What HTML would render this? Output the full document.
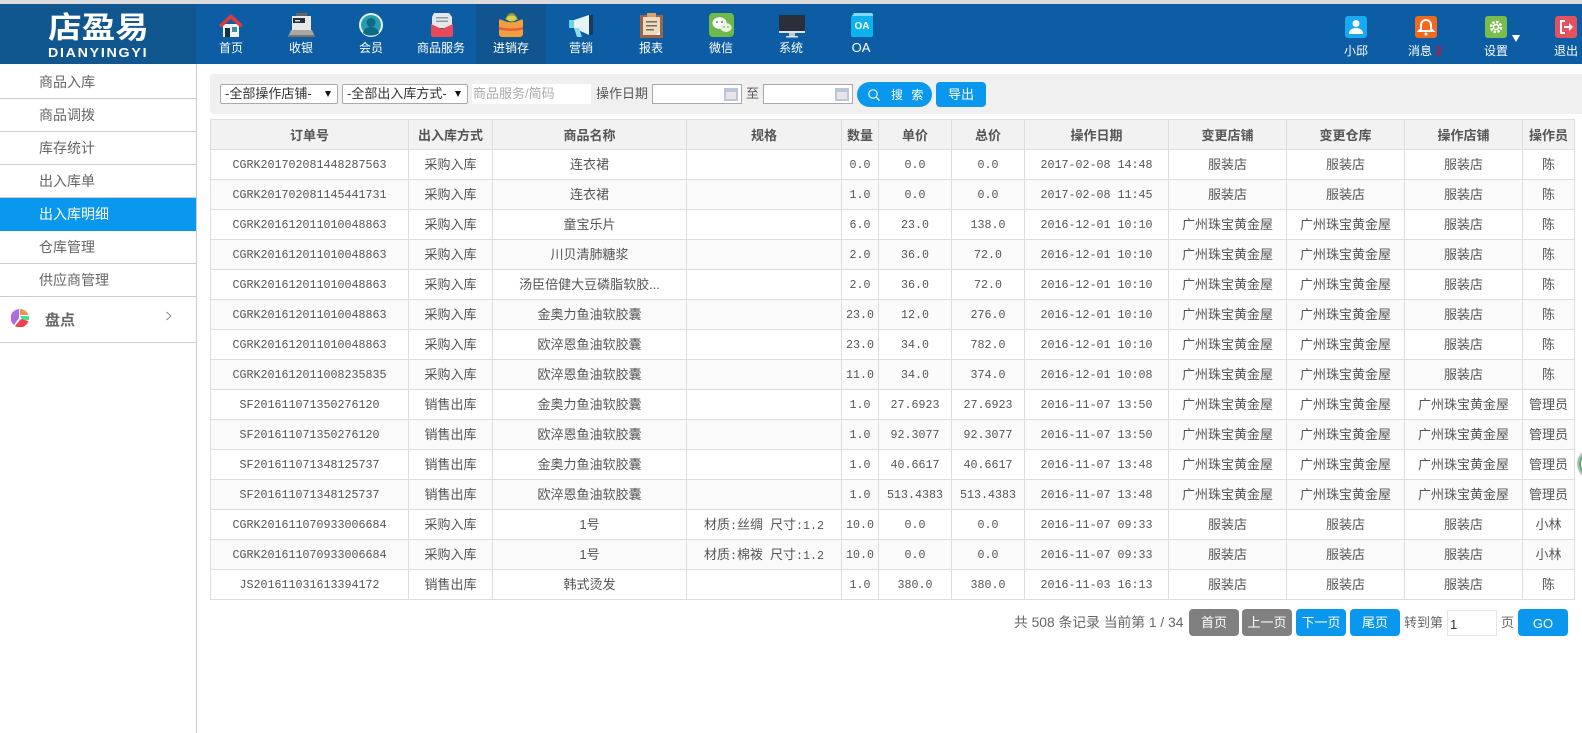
<!DOCTYPE html>
<html lang="zh-CN">
<head>
<meta charset="utf-8">
<title>店盈易</title>
<style>
*{box-sizing:border-box}
html,body{margin:0;padding:0;width:1582px;height:733px;overflow:hidden;background:#fff}
body{font-family:"Liberation Sans","Noto Sans CJK SC",sans-serif;font-size:13px;color:#555;position:relative}
.a{position:absolute}
#top{left:0;top:0;width:1582px;height:4px;background:#dcdcdc}
#hd{left:0;top:4px;width:1582px;height:60px;background:#0d5da5}
#logo{left:0;top:4px;width:196px;height:60px;background:#10568f}
#logo .t{position:absolute;left:48px;top:4px;font-size:30px;line-height:42px;font-weight:700;color:#fff;white-space:nowrap;transform:scaleX(1.12);transform-origin:0 50%}
#logo .e{position:absolute;left:48px;top:42px;font-size:12.5px;line-height:14px;font-weight:700;color:#fff;letter-spacing:1.5px;white-space:nowrap;transform:scaleX(1.14);transform-origin:0 50%}
.nav{position:absolute;top:4px;width:70px;height:60px;color:#fff;text-align:center}
.nav svg{position:absolute;left:22px;top:9px}
.nav span{position:absolute;left:-5px;right:-5px;top:35px;font-size:12px;line-height:18px}
.nav.on{background:#10558f}
.r{position:absolute;top:0;width:60px;height:64px;color:#fff;text-align:center}
.r svg{position:absolute;left:19px;top:16px}
.r span{position:absolute;left:0;right:0;top:42px;font-size:12px;line-height:18px}
#side{left:0;top:64px;width:197px;height:669px;border-right:1px solid #ccc;background:#fff}
.si{position:absolute;left:0;width:196px;height:33px;border-bottom:1px solid #ccc;padding-left:39px;font-size:14px;line-height:32px;color:#666}
.si.on{background:#0a98ee;color:#fff;border-bottom:0}
#bar{left:210px;top:74px;width:1372px;height:40px;background:#f0f0f0;border-radius:4px 0 0 4px}
.sel{position:absolute;top:84px;height:20px;background:#fff;border:1px solid #a9a9a9;border-radius:2px;font-size:13px;line-height:18px;color:#333;padding-left:4px;white-space:nowrap}
.sel i{position:absolute;top:6px;width:0;height:0;border-left:3.500px solid transparent;border-right:3.500px solid transparent;border-top:6px solid #111}
.date{position:absolute;top:84px;height:20px;background:#fff;border:1px solid #a9a9a9}
.date svg{position:absolute;right:2px;top:3px}
.lbl{position:absolute;font-size:14px;line-height:20px;color:#555;white-space:nowrap}
.btn{position:absolute;background:#0a98ee;color:#fff;text-align:center;border-radius:4px;white-space:nowrap}
.gray{background:#808080}
table{position:absolute;left:210px;top:119px;width:1364px;border-collapse:collapse;table-layout:fixed}
th,td{border:1px solid #ddd;height:30px;padding:0 0 2px;text-align:center;font-size:13px;color:#555;white-space:nowrap;overflow:hidden;font-weight:400}
th{background:#f2f2f2;font-weight:700;color:#555;padding:0}
tbody tr:nth-child(even) td{background:#fafafa}
.m{font-family:"Liberation Mono",monospace;font-size:11.67px}
td.m{padding:0}
</style>
</head>
<body>
<div id="top" class="a"></div>
<div id="hd" class="a"></div>
<div id="logo" class="a"><div class="t">店盈易</div><div class="e">DIANYINGYI</div></div>

<div class="nav" style="left:196px"><svg width="26" height="26" viewBox="0 0 26 26"><path d="M5 11h16v13H5z" fill="#eef3f3"/><path d="M7 15h5v9H7z" fill="#16303f"/><path d="M14 14h5v5h-5z" fill="#3f8f9d"/><path d="M1 12 13 1l12 11-2.500 2.500L13 6 3.500 14.500z" fill="#dd3b3b"/></svg><span>首页</span></div>
<div class="nav" style="left:266px"><svg width="27" height="26" viewBox="0 0 27 26"><path d="M8 0h11v4H8z" fill="#666"/><path d="M4 3h19v14H4z" fill="#e8e8e8"/><path d="M5 5h12v5H5z" fill="#25313a"/><path d="M7 7h5v1.500H7z" fill="#dcdcdc"/><path d="M3 17h21l3 7H0z" fill="#aaa6a2"/><path d="M0 22h27v2H0z" fill="#77736f"/></svg><span>收银</span></div>
<div class="nav" style="left:337px"><svg width="26" height="26" viewBox="0 0 26 26"><circle cx="12" cy="12" r="12" fill="#dff3f2"/><circle cx="12" cy="12" r="10" fill="#2b9db0"/><circle cx="12" cy="9.500" r="4.500" fill="#0e6a86"/><path d="M4 20c1-5 5-6 8-6s7 1 8 6c-4 3.500-12 3.500-16 0z" fill="#0e6a86"/></svg><span style="left:-6px;right:-4px">会员</span></div>
<div class="nav" style="left:406px"><svg width="26" height="26" viewBox="0 0 26 26"><path d="M6 0h15l3 4v11H4V4z" fill="#e4e8ea"/><path d="M8 4h12v1.500H8zM8 7.500h12V9H8z" fill="#8f9ba3"/><path d="M3 11 14 16l11-5v11a2 2 0 0 1-2 2H5a2 2 0 0 1-2-2z" fill="#e8495a"/></svg><span>商品服务</span></div>
<div class="nav on" style="left:476px"><svg width="26" height="26" viewBox="0 0 26 26"><path d="M7 7C9 2 11 0 13.500 0c3 0 5 3 6.500 7z" fill="#8d9b3a"/><ellipse cx="13.500" cy="5.500" rx="5" ry="3" fill="#d6d24a"/><path d="M1 8c0-2 1-2 3-1 6 3 12 3 18 0 2-1 3-1 3 1v13a3 3 0 0 1-3 3H4a3 3 0 0 1-3-3z" fill="#ef9f3f"/><path d="M1 14c8 2 16 2 24 0v2.500c-8 2-16 2-24 0z" fill="#e2613a"/></svg><span>进销存</span></div>
<div class="nav" style="left:546px"><svg width="26" height="26" viewBox="0 0 26 26"><path d="M1 7h5v8H1z" fill="#6fd0e6"/><path d="M6 7 21 2v20L6 15z" fill="#e4f4f9"/><path d="M21 2h4v20h-4z" fill="#173c5c"/><path d="M6 15h5l3 9H9z" fill="#8adcee"/></svg><span>营销</span></div>
<div class="nav" style="left:616px"><svg width="26" height="26" viewBox="0 0 26 26"><path d="M2 2h23v23H2z" fill="#a0634a"/><path d="M5 4h17v18H5z" fill="#e9dcc0"/><path d="M8 8h11v1.500H8zM8 12h11v1.500H8zM8 16h8v1.500H8z" fill="#7d6a58"/><path d="M9 0h9v4H9z" fill="#d9a36a"/><path d="M22 18v4h-4z" fill="#fff"/></svg><span>报表</span></div>
<div class="nav" style="left:687px"><svg width="26" height="26" viewBox="0 0 26 26"><rect width="25" height="24" y="0" rx="4" fill="#6fb84a"/><ellipse cx="10.500" cy="10" rx="7" ry="5.800" fill="#fff"/><ellipse cx="17" cy="14.500" rx="5.500" ry="4.500" fill="#e8f3e0"/><circle cx="8" cy="9" r="1" fill="#5a9a3a"/><circle cx="13" cy="9" r="1" fill="#5a9a3a"/><circle cx="15" cy="14" r=".8" fill="#5a9a3a"/><circle cx="19" cy="14" r=".8" fill="#5a9a3a"/></svg><span style="left:-6px;right:-4px">微信</span></div>
<div class="nav" style="left:757px"><svg width="26" height="26" viewBox="0 0 26 26"><rect y="2" width="26" height="18" rx="1" fill="#2a2f3a"/><path d="M0 18h26v2H0z" fill="#dfe4e8"/><path d="M10 20h6v3h-6z" fill="#c4cad0"/><path d="M7 23h12v1.500H7z" fill="#dfe4e8"/></svg><span style="left:-6px;right:-4px">系统</span></div>
<div class="nav" style="left:828px"><svg width="24" height="26" viewBox="0 0 24 26"><path d="M4 0h17a2 2 0 0 1 2 2v20a2 2 0 0 1-2 2H3a2 2 0 0 1-2-2V4z" fill="#0bb2ec"/><path d="M4 0h17a2 2 0 0 1 2 2v1H2z" fill="#7fdaf5"/><text x="12" y="16" font-family="Liberation Sans" font-size="10" font-weight="700" fill="#fff" text-anchor="middle">OA</text></svg><span style="font-size:13px;left:-7px;right:-3px">OA</span></div>

<div class="r" style="left:1326px"><svg width="22" height="22" viewBox="0 0 22 22"><rect width="22" height="22" rx="3" fill="#19a9f0"/><circle cx="11" cy="7.500" r="3.500" fill="#fff"/><path d="M4 18c0-4 3-6 7-6s7 2 7 6z" fill="#fff"/></svg><span>小邱</span></div>
<div class="r" style="left:1396px"><svg width="22" height="22" viewBox="0 0 22 22"><rect width="22" height="22" rx="3" fill="#f2691e"/><path d="M11 4a5 5 0 0 0-5 5v4l-2 2h14l-2-2V9a5 5 0 0 0-5-5z" fill="none" stroke="#fff" stroke-width="2"/><circle cx="11" cy="18" r="1.500" fill="#fff"/></svg><span style="left:-2px">消息 <b style="color:#d3102c;font-size:12px">2</b></span></div>
<div class="r" style="left:1466px"><svg width="22" height="22" viewBox="0 0 22 22"><rect width="22" height="22" rx="3" fill="#79bd4a"/><circle cx="11" cy="11" r="5" fill="none" stroke="#fff" stroke-width="2.500" stroke-dasharray="2.600 1.300"/><circle cx="11" cy="11" r="2.500" fill="none" stroke="#fff" stroke-width="1.500"/></svg><span>设置</span></div>
<div class="a" style="left:1512px;top:35px;width:0;height:0;border-left:4px solid transparent;border-right:4px solid transparent;border-top:7px solid #fff"></div>
<div class="r" style="left:1536px"><svg width="22" height="22" viewBox="0 0 22 22"><rect width="22" height="22" rx="3" fill="#e4515f"/><path d="M10 5H6v12h4" fill="none" stroke="#fff" stroke-width="2"/><path d="M9 10h5V7l4 4-4 4v-3H9z" fill="#fff"/></svg><span>退出</span></div>

<div id="side" class="a">
<div class="si" style="top:2px">商品入库</div>
<div class="si" style="top:35px">商品调拨</div>
<div class="si" style="top:68px">库存统计</div>
<div class="si" style="top:101px">出入库单</div>
<div class="si on" style="top:134px">出入库明细</div>
<div class="si" style="top:167px">仓库管理</div>
<div class="si" style="top:200px">供应商管理</div>
<div class="si" style="top:233px;height:46px;padding-left:45px;font-size:15px;font-weight:700;line-height:47px">盘点</div>
<svg class="a" style="left:11px;top:245px" width="18" height="18" viewBox="0 0 18 18"><path d="M8 0v9l-5 7A9 9 0 0 1 8 0z" fill="#b06be0"/><path d="M9 0a9 9 0 0 1 8.500 6H9z" fill="#ee9350"/><path d="M9 7h9v4H11z" fill="#45e0a0"/><path d="M10 10l7.500 2A9 9 0 0 1 4 17z" fill="#ef4050"/></svg>
<svg class="a" style="left:165px;top:246px" width="8" height="12" viewBox="0 0 8 12"><path d="M1.500 2 6 6l-4.500 4" fill="none" stroke="#888" stroke-width="1"/></svg>
</div>

<div id="bar" class="a"></div>
<div class="sel" style="left:220px;width:118px">-全部操作店铺-<i style="left:104px"></i></div>
<div class="sel" style="left:342px;width:126px">-全部出入库方式-<i style="left:112px"></i></div>
<div class="a" style="left:472px;top:84px;width:119px;height:20px;background:#fff;font-size:13px;line-height:20px;color:#aaa;padding-left:1px">商品服务/简码</div>
<div class="lbl" style="left:596px;top:84px;font-size:13px">操作日期</div>
<div class="date" style="left:652px;width:90px"><svg width="15" height="13" viewBox="0 0 15 13"><rect width="14" height="13" fill="#bcc6d8"/><rect x="2" y="4" width="10" height="7" fill="#e8e4ea"/></svg></div>
<div class="lbl" style="left:746px;top:84px;font-size:13px">至</div>
<div class="date" style="left:763px;width:90px"><svg width="15" height="13" viewBox="0 0 15 13"><rect width="14" height="13" fill="#bcc6d8"/><rect x="2" y="4" width="10" height="7" fill="#e8e4ea"/></svg></div>
<div class="btn" style="left:857px;top:82px;width:75px;height:25px;border-radius:13px;font-size:12px;line-height:26px;padding-left:34px;letter-spacing:2.500px;text-align:left">搜 索<svg class="a" style="left:10px;top:6px" width="14" height="14" viewBox="0 0 14 14"><circle cx="6" cy="6" r="4.200" fill="none" stroke="#fff" stroke-width="1.100"/><path d="M9 9l3.500 3.500" stroke="#fff" stroke-width="1.300"/></svg></div>
<div class="btn" style="left:936px;top:82px;width:50px;height:25px;font-size:13px;line-height:26px">导出</div>

<table>
<colgroup><col style="width:198px"><col style="width:84px"><col style="width:194px"><col style="width:155px"><col style="width:37px"><col style="width:73px"><col style="width:73px"><col style="width:144px"><col style="width:118px"><col style="width:118px"><col style="width:118px"><col style="width:52px"></colgroup>
<thead><tr><th>订单号</th><th>出入库方式</th><th>商品名称</th><th>规格</th><th>数量</th><th>单价</th><th>总价</th><th>操作日期</th><th>变更店铺</th><th>变更仓库</th><th>操作店铺</th><th>操作员</th></tr></thead>
<tbody>
<tr><td class="m">CGRK201702081448287563</td><td>采购入库</td><td>连衣裙</td><td></td><td class="m">0.0</td><td class="m">0.0</td><td class="m">0.0</td><td class="m">2017-02-08 14:48</td><td>服装店</td><td>服装店</td><td>服装店</td><td>陈</td></tr>
<tr><td class="m">CGRK201702081145441731</td><td>采购入库</td><td>连衣裙</td><td></td><td class="m">1.0</td><td class="m">0.0</td><td class="m">0.0</td><td class="m">2017-02-08 11:45</td><td>服装店</td><td>服装店</td><td>服装店</td><td>陈</td></tr>
<tr><td class="m">CGRK201612011010048863</td><td>采购入库</td><td>童宝乐片</td><td></td><td class="m">6.0</td><td class="m">23.0</td><td class="m">138.0</td><td class="m">2016-12-01 10:10</td><td>广州珠宝黄金屋</td><td>广州珠宝黄金屋</td><td>服装店</td><td>陈</td></tr>
<tr><td class="m">CGRK201612011010048863</td><td>采购入库</td><td>川贝清肺糖浆</td><td></td><td class="m">2.0</td><td class="m">36.0</td><td class="m">72.0</td><td class="m">2016-12-01 10:10</td><td>广州珠宝黄金屋</td><td>广州珠宝黄金屋</td><td>服装店</td><td>陈</td></tr>
<tr><td class="m">CGRK201612011010048863</td><td>采购入库</td><td>汤臣倍健大豆磷脂软胶...</td><td></td><td class="m">2.0</td><td class="m">36.0</td><td class="m">72.0</td><td class="m">2016-12-01 10:10</td><td>广州珠宝黄金屋</td><td>广州珠宝黄金屋</td><td>服装店</td><td>陈</td></tr>
<tr><td class="m">CGRK201612011010048863</td><td>采购入库</td><td>金奥力鱼油软胶囊</td><td></td><td class="m">23.0</td><td class="m">12.0</td><td class="m">276.0</td><td class="m">2016-12-01 10:10</td><td>广州珠宝黄金屋</td><td>广州珠宝黄金屋</td><td>服装店</td><td>陈</td></tr>
<tr><td class="m">CGRK201612011010048863</td><td>采购入库</td><td>欧淬恩鱼油软胶囊</td><td></td><td class="m">23.0</td><td class="m">34.0</td><td class="m">782.0</td><td class="m">2016-12-01 10:10</td><td>广州珠宝黄金屋</td><td>广州珠宝黄金屋</td><td>服装店</td><td>陈</td></tr>
<tr><td class="m">CGRK201612011008235835</td><td>采购入库</td><td>欧淬恩鱼油软胶囊</td><td></td><td class="m">11.0</td><td class="m">34.0</td><td class="m">374.0</td><td class="m">2016-12-01 10:08</td><td>广州珠宝黄金屋</td><td>广州珠宝黄金屋</td><td>服装店</td><td>陈</td></tr>
<tr><td class="m">SF201611071350276120</td><td>销售出库</td><td>金奥力鱼油软胶囊</td><td></td><td class="m">1.0</td><td class="m">27.6923</td><td class="m">27.6923</td><td class="m">2016-11-07 13:50</td><td>广州珠宝黄金屋</td><td>广州珠宝黄金屋</td><td>广州珠宝黄金屋</td><td>管理员</td></tr>
<tr><td class="m">SF201611071350276120</td><td>销售出库</td><td>欧淬恩鱼油软胶囊</td><td></td><td class="m">1.0</td><td class="m">92.3077</td><td class="m">92.3077</td><td class="m">2016-11-07 13:50</td><td>广州珠宝黄金屋</td><td>广州珠宝黄金屋</td><td>广州珠宝黄金屋</td><td>管理员</td></tr>
<tr><td class="m">SF201611071348125737</td><td>销售出库</td><td>金奥力鱼油软胶囊</td><td></td><td class="m">1.0</td><td class="m">40.6617</td><td class="m">40.6617</td><td class="m">2016-11-07 13:48</td><td>广州珠宝黄金屋</td><td>广州珠宝黄金屋</td><td>广州珠宝黄金屋</td><td>管理员</td></tr>
<tr><td class="m">SF201611071348125737</td><td>销售出库</td><td>欧淬恩鱼油软胶囊</td><td></td><td class="m">1.0</td><td class="m">513.4383</td><td class="m">513.4383</td><td class="m">2016-11-07 13:48</td><td>广州珠宝黄金屋</td><td>广州珠宝黄金屋</td><td>广州珠宝黄金屋</td><td>管理员</td></tr>
<tr><td class="m">CGRK201611070933006684</td><td>采购入库</td><td>1号</td><td>材质<span class="m">:</span>丝绸<span class="m"> </span>尺寸<span class="m">:1.2</span></td><td class="m">10.0</td><td class="m">0.0</td><td class="m">0.0</td><td class="m">2016-11-07 09:33</td><td>服装店</td><td>服装店</td><td>服装店</td><td>小林</td></tr>
<tr><td class="m">CGRK201611070933006684</td><td>采购入库</td><td>1号</td><td>材质<span class="m">:</span>棉袯<span class="m"> </span>尺寸<span class="m">:1.2</span></td><td class="m">10.0</td><td class="m">0.0</td><td class="m">0.0</td><td class="m">2016-11-07 09:33</td><td>服装店</td><td>服装店</td><td>服装店</td><td>小林</td></tr>
<tr><td class="m">JS201611031613394172</td><td>销售出库</td><td>韩式烫发</td><td></td><td class="m">1.0</td><td class="m">380.0</td><td class="m">380.0</td><td class="m">2016-11-03 16:13</td><td>服装店</td><td>服装店</td><td>服装店</td><td>陈</td></tr>
</tbody>
</table>

<div class="lbl" style="left:1014px;top:613px;font-size:13.800px;color:#666">共 508 条记录 当前第 1 / 34</div>
<div class="btn gray" style="left:1189px;top:609px;width:50px;height:27px;font-size:13px;line-height:28px">首页</div>
<div class="btn gray" style="left:1242px;top:609px;width:50px;height:27px;font-size:13px;line-height:28px">上一页</div>
<div class="btn" style="left:1296px;top:609px;width:50px;height:27px;font-size:13px;line-height:28px">下一页</div>
<div class="btn" style="left:1350px;top:609px;width:50px;height:27px;font-size:13px;line-height:28px">尾页</div>
<div class="lbl" style="left:1404px;top:613px;font-size:13px;color:#666">转到第</div>
<div class="a" style="left:1447px;top:610px;width:50px;height:26px;border:1px solid #e5e5e5;font-size:13px;line-height:27px;color:#333;padding-left:2px">1</div>
<div class="lbl" style="left:1501px;top:613px;font-size:13px;color:#666">页</div>
<div class="btn" style="left:1518px;top:609px;width:50px;height:27px;font-size:13px;line-height:29px">GO</div>

<div class="a" style="left:1577px;top:448px;width:32px;height:32px;border-radius:50%;background:#fff;border:2px solid #bbb;box-shadow:inset 0 0 0 2px #4caf6a"></div>
</body>
</html>
